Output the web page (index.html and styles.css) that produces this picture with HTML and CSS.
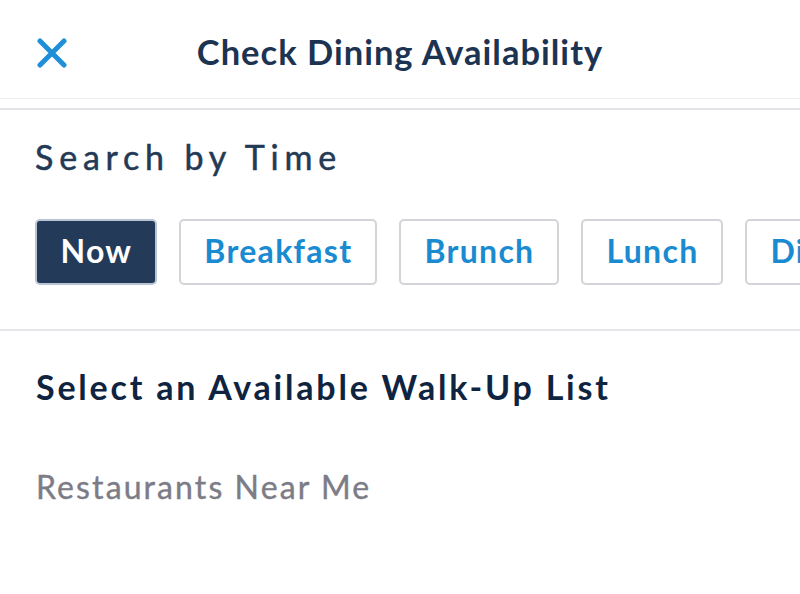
FILE: index.html
```html
<!DOCTYPE html>
<html>
<head>
<meta charset="utf-8">
<link rel="stylesheet" href="styles.css">
</head>
<body>
<div class="screen">
  <header class="topbar">
    <button class="close" aria-label="Close">
      <svg width="30" height="30" viewBox="0 0 30 30"><path d="M3 3 L27 27 M27 3 L3 27" stroke="#1f8fd8" stroke-width="5" stroke-linecap="round" fill="none"/></svg>
    </button>
    <h1 class="title">Check Dining Availability</h1>
  </header>
  <section class="time-section">
    <h2 class="section-title">Search by Time</h2>
    <div class="chips">
      <button class="chip chip-active">Now</button>
      <button class="chip">Breakfast</button>
      <button class="chip">Brunch</button>
      <button class="chip">Lunch</button>
      <button class="chip">Dinner</button>
    </div>
  </section>
  <section class="list-section">
    <h3 class="list-title">Select an Available Walk-Up List</h3>
    <p class="sub-title">Restaurants Near Me</p>
  </section>
</div>
</body>
</html>
```
FILE: styles.css
```css
* { box-sizing: border-box; }
html, body { margin: 0; padding: 0; background: #fff; }
body { font-family: "Lato", "Liberation Sans", sans-serif; width: 800px; height: 594px; overflow: hidden; }
.screen { width: 800px; }
.topbar {
  position: relative;
  height: 99px;
  display: flex;
  align-items: center;
  justify-content: center;
  border-bottom: 1px solid #ececf3;
}
.close {
  position: absolute;
  left: 37px;
  top: 38px;
  width: 30px;
  height: 30px;
  padding: 0;
  border: 0;
  background: none;
  display: block;
}
.close svg { display: block; }
.title {
  margin: 0;
  font-size: 34.5px;
  font-weight: 700;
  letter-spacing: 1px;
  color: #1d3352;
  padding-top: 4px;
}
.time-section {
  margin-top: 9px;
  border-top: 2px solid #e3e3e8;
  border-bottom: 2px solid #e6e6ea;
  padding: 0 0 0 35px;
  height: 223px;
  overflow: hidden;
}
.section-title {
  margin: 27px 0 0;
  font-size: 34px;
  font-weight: 400;
  letter-spacing: 5.8px;
  color: #233955;
  line-height: 40px;
  -webkit-text-stroke: 0.5px #233955;
}
.chips {
  display: flex;
  gap: 22px;
  margin-top: 42px;
  white-space: nowrap;
}
.chip {
  flex: none;
  height: 66px;
  padding: 0 22.5px 3px 23.5px;
  border: 2px solid #d3d3d8;
  border-radius: 5px;
  background: #fff;
  color: #1a8ad1;
  font-family: inherit;
  font-size: 32px;
  font-weight: 700;
  letter-spacing: 1.3px;
}
.chip-active {
  background: #243a59;
  color: #fff;
  border-color: #b9c5d6;
}
.list-section { padding: 0 36px; }
.list-title {
  margin: 36px 0 0;
  font-size: 34px;
  font-weight: 700;
  letter-spacing: 2.8px;
  color: #0f2440;
  line-height: 40px;
}
.sub-title {
  margin: 60px 0 0;
  font-size: 32px;
  font-weight: 400;
  letter-spacing: 2.1px;
  color: #7c7c87;
  line-height: 40px;
  -webkit-text-stroke: 0.4px #7c7c87;
}
```
